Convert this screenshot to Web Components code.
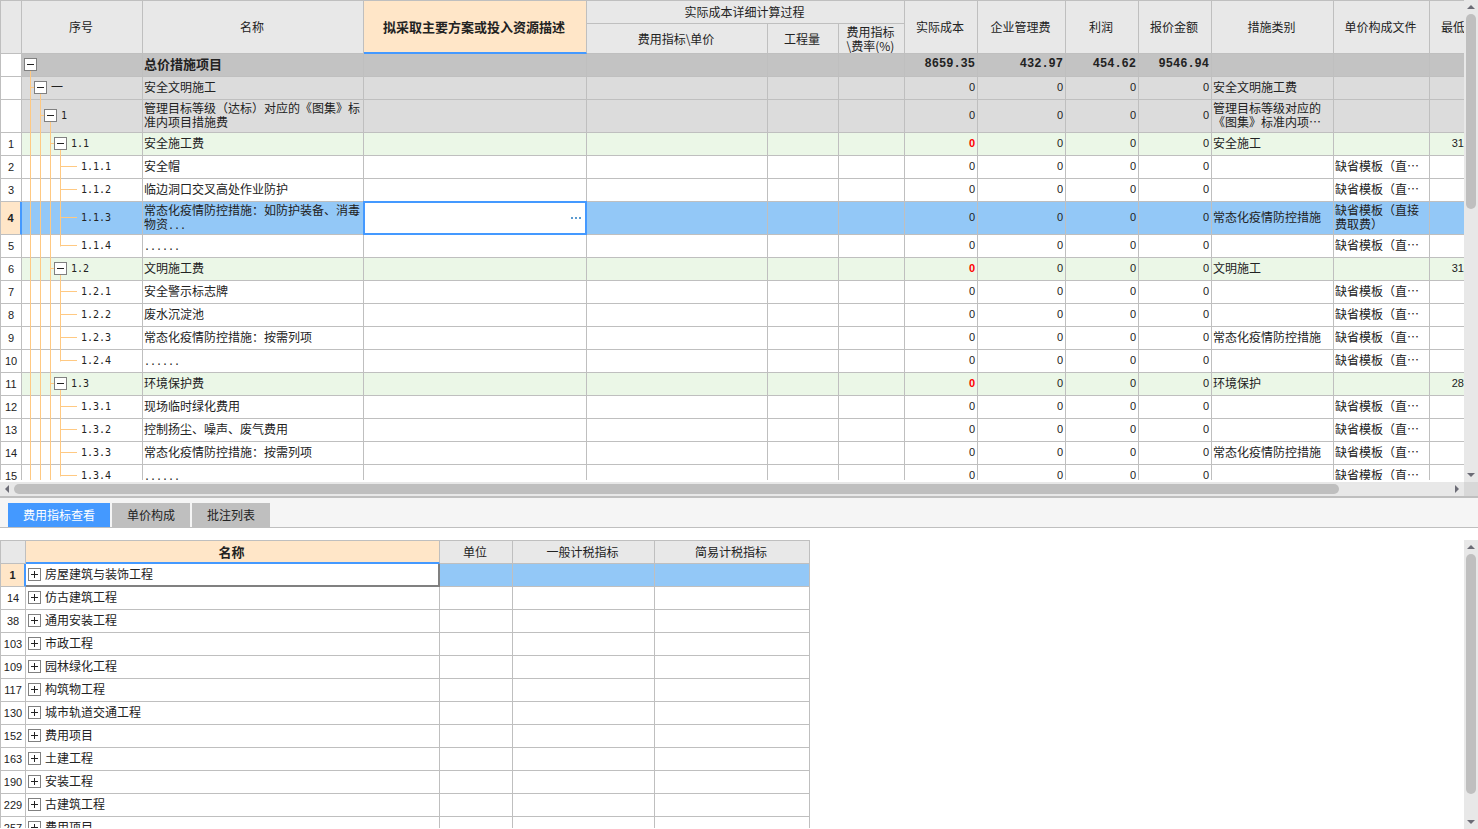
<!DOCTYPE html>
<html lang="zh-CN">
<head>
<meta charset="utf-8">
<title>措施项目成本测算</title>
<style>
  html, body { margin: 0; height: 100%; }
  body {
    --line: #bfbfbf;
    --head: #e8e8e8;
    --accent: #4499ff;
    --picked: #93c8f7;
    --peach: #ffe6c8;
    --num: "Liberation Sans", "Noto Sans CJK SC", sans-serif;
    --mono: "DejaVu Sans Mono", "Noto Sans CJK SC", monospace;
    font: 12px/14px "Noto Sans CJK SC", sans-serif;
    text-spacing-trim: space-all;
    color: #222;
    background: #fff;
    overflow: hidden;
  }
</style>
</head>
<body>
<cost-workspace>
  <scroll-pane slot="upper" both style="--v-thumb: 43; --v-rest: 57; --h-thumb: 923; --h-rest: 77">
    <measure-grid></measure-grid>
  </scroll-pane>
  <tab-strip slot="tabs">
    <tab-item selected>费用指标查看</tab-item>
    <tab-item>单价构成</tab-item>
    <tab-item>批注列表</tab-item>
  </tab-strip>
  <scroll-pane slot="lower" style="--v-thumb: 92; --v-rest: 8">
    <index-grid></index-grid>
  </scroll-pane>
</cost-workspace>

<script>
const gridStyle = `
  :host { display: block; }
  table { border-collapse: separate; border-spacing: 0; table-layout: fixed;
          border-left: 1px solid var(--line); border-top: 1px solid var(--line); }
  th, td { box-sizing: border-box; border-right: 1px solid var(--line);
           border-bottom: 1px solid var(--line); overflow: hidden; }
  th { padding: 0; background: var(--head); font-weight: normal; text-align: center; }
  thead th { padding-right: 2px; }
  thead th.active { background: var(--peach); font-weight: bold; font-size: 13px;
                    border-bottom: 2px solid var(--accent); }
  td { padding: 1px 2px 3px 1px; height: 23px; text-align: left; }
  tbody th { background: #fff; font-family: var(--num); font-size: 11px; }
  tr.picked td { background: var(--picked); }
  tr.picked th { background: var(--peach); font-weight: bold; border-right: 2px solid var(--accent); }
  .node { display: flex; align-items: center; }
`;

const el = (tag, cls, text) => {
  const e = document.createElement(tag);
  if (cls) e.className = cls;
  if (text !== undefined) e.textContent = text;
  return e;
};

customElements.define('tree-toggle', class extends HTMLElement {
  connectedCallback() {
    const open = this.hasAttribute('open');
    this.attachShadow({ mode: 'open' }).innerHTML = `
      <style>
        :host { display: block; flex: none; width: 13px; height: 13px; position: relative; }
        button { display: block; width: 13px; height: 13px; padding: 0; border: 0; background: none; }
        svg { display: block; }
      </style>
      <button type="button" aria-label="${open ? '折叠' : '展开'}">
        <svg width="13" height="13" shape-rendering="crispEdges">
          <rect width="13" height="13" fill="#808080"/><rect x="1" y="1" width="11" height="11" fill="#fff"/>
          <rect x="3" y="6" width="7" height="1" fill="#222"/>
          ${open ? '' : '<rect x="6" y="3" width="1" height="7" fill="#222"/>'}
        </svg>
      </button>`;
  }
});

customElements.define('cell-editor', class extends HTMLElement {
  connectedCallback() {
    this.attachShadow({ mode: 'open' }).innerHTML = `
      <style>
        :host { display: flex; box-sizing: border-box; background: #fff; border: 2px solid var(--accent); }
        input { flex: 1; min-width: 0; border: 0; padding: 0 2px; font: inherit; outline: 0; background: none; }
        button { width: 18px; padding: 0; border: 0; background: none; display: flex; align-items: center; justify-content: center; }
      </style>
      <input type="text" aria-label="拟采取主要方案或投入资源描述">
      <button type="button" aria-label="选择">
        <svg width="10" height="2" shape-rendering="crispEdges" fill="#5b9bd0">
          <rect width="2" height="2"/><rect x="4" width="2" height="2"/><rect x="8" width="2" height="2"/>
        </svg>
      </button>`;
  }
});

const T = '缺省模板（直…', C = '常态化疫情防控措施';
/* row number, level, code, name, category, price file, lowest, row kind, last child */
const measures = [
  ['', 0, '', '总价措施项目', '', '', '', 'total'],
  ['', 1, '一', '安全文明施工', '安全文明施工费', '', '', 'group'],
  ['', 2, '1', '管理目标等级（达标）对应的《图集》标准内项目措施费', '管理目标等级对应的《图集》标准内项…', '', '', 'group'],
  ['1', 3, '1.1', '安全施工费', '安全施工', '', '31', 'item'],
  ['2', 4, '1.1.1', '安全帽', '', T, '', ''],
  ['3', 4, '1.1.2', '临边洞口交叉高处作业防护', '', T, '', ''],
  ['4', 4, '1.1.3', '常态化疫情防控措施：如防护装备、消毒物资...', C, '缺省模板（直接费取费）', '', 'picked'],
  ['5', 4, '1.1.4', '......', '', T, '', '', true],
  ['6', 3, '1.2', '文明施工费', '文明施工', '', '31', 'item'],
  ['7', 4, '1.2.1', '安全警示标志牌', '', T, '', ''],
  ['8', 4, '1.2.2', '废水沉淀池', '', T, '', ''],
  ['9', 4, '1.2.3', '常态化疫情防控措施：按需列项', C, T, '', ''],
  ['10', 4, '1.2.4', '......', '', T, '', '', true],
  ['11', 3, '1.3', '环境保护费', '环境保护', '', '28', 'item'],
  ['12', 4, '1.3.1', '现场临时绿化费用', '', T, '', ''],
  ['13', 4, '1.3.2', '控制扬尘、噪声、废气费用', '', T, '', ''],
  ['14', 4, '1.3.3', '常态化疫情防控措施：按需列项', C, T, '', ''],
  ['15', 4, '1.3.4', '......', '', T, '', '', true]
];

/* Connector lines of one tree cell, as background layers */
function treeLines(level, last) {
  const c = 'linear-gradient(#ffc982,#ffc982) no-repeat ', out = [];
  const x = n => 8 + 10 * n;
  const leaf = level === 4;
  for (let n = 0; n < level; n++)
    out.push(c + `${x(n)}px 0 / 1px ${n === level - 1 && last ? '50%' : '100%'}`);
  if (level) out.push(c + `${x(level - 1)}px calc(50% - 1px) / ${leaf ? 17 : 4}px 1px`);
  if (!leaf) out.push(c + `${x(level)}px 100% / 1px 50%`);
  return out.join(',');
}

customElements.define('measure-grid', class extends HTMLElement {
  connectedCallback() {
    const root = this.attachShadow({ mode: 'open' });
    root.innerHTML = `
      <style>${gridStyle}
        table { width: 100%; min-width: 1464px; }
        thead tr:first-child { height: 23px; }
        thead tr:last-child { height: 30px; }
        .lowest { text-align: left; padding-left: 11px; white-space: nowrap; }
        .lowest, td.end { border-right: 0; }
        tr.total td { background: #c3c3c3; font-weight: bold; font-size: 13px; }
        tr.group td { background: #dcdcdc; }
        tr.item td { background: #ebf7e7; }
        td.tree { position: relative; padding: 0 0 1px 2px; overflow: visible; }
        td.tree::before { content: ""; position: absolute; inset: 0 0 -1px 0; background: var(--lines); }
        .code { position: relative; font-family: var(--mono); font-size: 10px; }
        .code.han { font-size: 12px; }
        td.n { text-align: right; font-family: var(--num); font-size: 11px; }
        tr.total td.n { font-family: "Liberation Mono", monospace; font-size: 12px; }
        tr.item td.cost { color: #f00; font-weight: bold; }
        tr td.end { padding-right: 0; }
        .dots { font-family: var(--mono); font-size: 10px; line-height: 10px; }
        td.edit { position: relative; overflow: visible; }
        cell-editor { position: absolute; inset: -1px; }
      </style>
      <table>
        <colgroup>${[21, 121, 221, 223, 181, 71, 66, 73, 88, 73, 73, 122, 96].map(w => `<col style="width:${w}px">`).join('')}<col></colgroup>
        <thead>
          <tr><th rowspan="2"></th><th rowspan="2">序号</th><th rowspan="2">名称</th>
            <th rowspan="2" class="active">拟采取主要方案或投入资源描述</th>
            <th colspan="3">实际成本详细计算过程</th>
            <th rowspan="2">实际成本</th><th rowspan="2">企业管理费</th><th rowspan="2">利润</th>
            <th rowspan="2">报价金额</th><th rowspan="2">措施类别</th><th rowspan="2">单价构成文件</th>
            <th rowspan="2" class="lowest">最低</th></tr>
          <tr><th>费用指标\\单价</th><th>工程量</th><th>费用指标<br>\\费率(%)</th></tr>
        </thead>
        <tbody></tbody>
      </table>`;
    const body = root.querySelector('tbody');
    for (const [no, level, code, name, cat, file, low, kind, last] of measures) {
      const tr = el('tr', kind);
      tr.append(el('th', '', no));

      const tree = el('td', 'tree');
      tree.style.setProperty('--lines', treeLines(level, last));
      const node = el('div', 'node');
      if (level < 4) {
        const t = el('tree-toggle');
        t.setAttribute('open', '');
        node.append(t);
        node.style.paddingLeft = 10 * level + 'px';
        node.style.gap = '4px';
      } else node.style.paddingLeft = '57px';
      if (code) node.append(el('span', code === '一' ? 'code han' : 'code', code));
      tree.append(node);
      tr.append(tree);

      const nm = el('td');
      const dots = name.match(/\.+$/);
      nm.append(dots ? name.slice(0, dots.index) : name);
      if (dots) nm.append(el('span', 'dots', dots[0]));
      tr.append(nm);

      const desc = el('td');
      if (kind === 'picked') { desc.className = 'edit'; desc.append(el('cell-editor')); }
      tr.append(desc, el('td'), el('td'), el('td'));

      const sums = kind === 'total' ? ['8659.35', '432.97', '454.62', '9546.94'] : ['0', '0', '0', '0'];
      sums.forEach((v, i) => tr.append(el('td', i ? 'n' : 'n cost', v)));
      tr.append(el('td', '', cat), el('td', '', file), el('td', 'n end', low));
      body.append(tr);
    }
  }
});

const indexes = [['1', '房屋建筑与装饰工程'], ['14', '仿古建筑工程'], ['38', '通用安装工程'], ['103', '市政工程'],
  ['109', '园林绿化工程'], ['117', '构筑物工程'], ['130', '城市轨道交通工程'], ['152', '费用项目'],
  ['163', '土建工程'], ['190', '安装工程'], ['229', '古建筑工程'], ['257', '费用项目']];

customElements.define('index-grid', class extends HTMLElement {
  connectedCallback() {
    const root = this.attachShadow({ mode: 'open' });
    root.innerHTML = `
      <style>${gridStyle}
        table { width: 810px; }
        thead tr { height: 23px; }
        td:nth-child(2) { padding: 0 2px 1px; }
        .node { gap: 4px; }
        .node span { padding-bottom: 2px; }
        tr.picked td:nth-child(2) { background: #fff; border-right: 2px solid #808080;
                                    border-bottom: 2px solid #808080; padding-bottom: 0; }
      </style>
      <table>
        <colgroup>${[25, 414, 73, 142, 155].map(w => `<col style="width:${w}px">`).join('')}</colgroup>
        <thead><tr><th></th><th class="active">名称</th><th>单位</th><th>一般计税指标</th><th>简易计税指标</th></tr></thead>
        <tbody></tbody>
      </table>`;
    const body = root.querySelector('tbody');
    indexes.forEach(([no, name], i) => {
      const tr = el('tr', i ? '' : 'picked');
      const td = el('td'), node = el('div', 'node');
      node.append(el('tree-toggle'), el('span', '', name));
      td.append(node);
      tr.append(el('th', '', no), td, el('td'), el('td'), el('td'));
      body.append(tr);
    });
  }
});

customElements.define('scroll-rail', class extends HTMLElement {
  connectedCallback() {
    const h = this.hasAttribute('horizontal');
    this.attachShadow({ mode: 'open' }).innerHTML = `
      <style>
        :host { display: flex; flex-direction: ${h ? 'row' : 'column'}; background: var(--head); }
        button { flex: none; width: 14px; height: 14px; padding: 0; border: 0; background: none;
                 display: flex; align-items: center; justify-content: center; }
        .thumb { flex: var(--${h ? 'h' : 'v'}-thumb) 1 0; margin: ${h ? '2px 0' : '0 2px'}; border-radius: 5px; background: #bfbfbf; }
        .rest { flex: var(--${h ? 'h' : 'v'}-rest) 1 0; }
      </style>
      <button type="button" aria-label="${h ? '向左' : '向上'}"><svg width="8" height="8"><path fill="#6c6c76" d="${h ? 'M6 0V8L2 4Z' : 'M0 6H8L4 2Z'}"/></svg></button>
      <div class="thumb"></div><div class="rest"></div>
      <button type="button" aria-label="${h ? '向右' : '向下'}"><svg width="8" height="8"><path fill="#6c6c76" d="${h ? 'M2 0V8L6 4Z' : 'M0 2H8L4 6Z'}"/></svg></button>`;
  }
});

customElements.define('scroll-pane', class extends HTMLElement {
  connectedCallback() {
    const both = this.hasAttribute('both');
    this.attachShadow({ mode: 'open' }).innerHTML = `
      <style>
        :host { display: grid; min-height: 0; grid-template-columns: minmax(0, 1fr) 14px;
                grid-template-rows: minmax(0, 1fr) ${both ? '14px' : ''}; }
        .view { overflow: hidden; margin-bottom: ${both ? '2px' : '1px'}; }
        .corner { background: #d8d8d8; }
      </style>
      <div class="view"><slot></slot></div>
      <scroll-rail></scroll-rail>
      ${both ? '<scroll-rail horizontal></scroll-rail><div class="corner"></div>' : ''}`;
  }
});

customElements.define('tab-item', class extends HTMLElement {
  connectedCallback() {
    const on = this.hasAttribute('selected');
    this.attachShadow({ mode: 'open' }).innerHTML = `
      <style>
        :host { display: block; }
        button { display: block; height: 24px; padding: 0 15px; border: 0; font: inherit;
                 color: ${on ? '#fff' : '#222'}; background: ${on ? 'var(--accent)' : '#bfbfbf'}; }
      </style>
      <button type="button" role="tab" aria-selected="${on}"><slot></slot></button>`;
  }
});

customElements.define('tab-strip', class extends HTMLElement {
  connectedCallback() {
    this.attachShadow({ mode: 'open' }).innerHTML = `
      <style>
        :host { display: block; }
        div { display: flex; gap: 2px; padding: 5px 8px 0; background: #f5f5f5; border-bottom: 1px solid var(--line); }
      </style>
      <div role="tablist"><slot></slot></div>`;
  }
});

customElements.define('cost-workspace', class extends HTMLElement {
  connectedCallback() {
    this.attachShadow({ mode: 'open' }).innerHTML = `
      <style>
        :host { display: flex; flex-direction: column; height: 100vh; }
        .upper { box-sizing: border-box; flex: none; height: 60vh; height: round(up, 60vh, 1px);
                 display: grid; grid-template-rows: minmax(0, 1fr); border-bottom: 2px solid var(--line); }
        .lower { flex: 1; min-height: 0; margin-top: 12px; display: grid; grid-template-rows: minmax(0, 1fr); }
      </style>
      <div class="upper"><slot name="upper"></slot></div>
      <slot name="tabs"></slot>
      <div class="lower"><slot name="lower"></slot></div>`;
  }
});
</script>
</body>
</html>
